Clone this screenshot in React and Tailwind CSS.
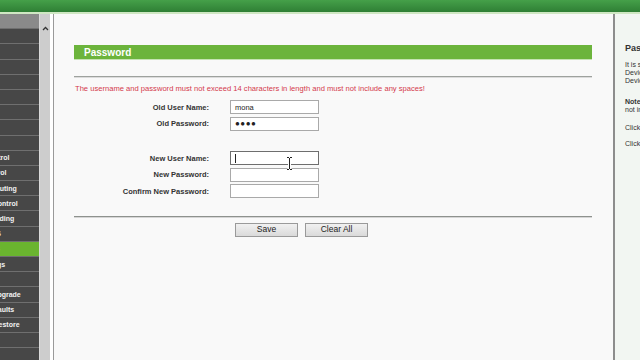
import React from "react";

const menu = [
  { label: "Status", tone: "head" },
  { label: "Quick Setup" },
  { label: "WPS" },
  { label: "Network" },
  { label: "Wireless" },
  { label: "DHCP" },
  { label: "NAT" },
  { label: "Forwarding" },
  { label: "Security" },
  { label: "Parental Control" },
  { label: "Access Control" },
  { label: "Advanced Routing" },
  { label: "Bandwidth Control" },
  { label: "IP & MAC Binding" },
  { label: "Dynamic DNS" },
  { label: "System Tools", tone: "active" },
  { label: "- Time Settings" },
  { label: "- Diagnostic" },
  { label: "- Firmware Upgrade" },
  { label: "- Factory Defaults" },
  { label: "- Backup & Restore" },
  { label: "- Reboot" },
  { label: "- Password" },
  { label: "- System Log" },
];

function Sidebar() {
  return (
    <div className="w-[39px] flex flex-col overflow-hidden bg-[#474747]">
      {menu.map((item) => (
        <div
          key={item.label}
          className={
            "h-[15.2px] shrink-0 border-b border-[#6f6f6f] flex items-center overflow-hidden whitespace-nowrap " +
            (item.tone === "head"
              ? "bg-[#8a8a8a]"
              : item.tone === "active"
              ? "bg-[#6ab42f]"
              : "bg-[#474747]")
          }
        >
          <span className="ml-[-45px] text-[7px] leading-none font-bold text-[#f2f2f2]">
            {item.label}
          </span>
        </div>
      ))}
    </div>
  );
}

function Field({ label, value, focused }) {
  return (
    <div className="flex items-center h-[16.5px]">
      <div className="w-[135px] text-right text-[7.5px] font-bold text-[#333]">{label}</div>
      <div
        className={
          "ml-[21px] w-[89px] h-[14px] bg-white flex items-center px-[4px] text-[7.5px] text-[#222] " +
          (focused ? "border border-[#6e6e6e]" : "border border-[#a9a9a9]")
        }
      >
        {focused ? <span className="w-px h-[9px] bg-[#222]" /> : value}
      </div>
    </div>
  );
}

export default function App() {
  return (
    <div
      className="w-[640px] h-[360px] flex flex-col overflow-hidden bg-white relative"
      style={{ fontFamily: '"Liberation Sans", Arial, sans-serif' }}
    >
      {/* top bar */}
      <div className="h-[12px] bg-gradient-to-b from-[#45a049] to-[#2f7f35]" />
      <div className="h-[2px] bg-[#cfe7c3]" />

      <div className="flex-1 flex min-h-0">
        <Sidebar />

        {/* scrollbar */}
        <div className="w-[11px] bg-[#cdcdcd] border-l border-[#dadada] flex justify-center pt-[12px]">
          <svg width="7" height="5" viewBox="0 0 7 5">
            <path d="M1 4 L3.5 1.5 L6 4" stroke="#333" strokeWidth="1.3" fill="none" />
          </svg>
        </div>
        <div className="w-[3px] bg-white" />

        {/* main */}
        <div className="flex-1 border-l border-[#9a9a9a] bg-[#f9f9f9] pt-[31px] pl-[20px] pr-[21px]">
          <div className="h-[15px] bg-[#6cb43c] flex items-center pl-[10px] border-b border-[#c6e3b3]">
            <span className="text-[10px] font-bold text-white">Password</span>
          </div>
          <div className="mt-[16px] h-[2px] border-t border-[#9ea29e] bg-[#dcdcdc]" />
          <div className="mt-[6px] text-[7.6px] leading-[10px] text-[#d43a4c] pl-px whitespace-nowrap">
            The username and password must not exceed 14 characters in length and must not include any spaces!
          </div>

          <div className="mt-[5px] flex flex-col">
            <Field label="Old User Name:" value="mona" />
            <Field label="Old Password:" value={<span className="tracking-[0.5px] text-[8px]">●●●●</span>} />
          </div>
          <div className="mt-[18px] flex flex-col">
            <Field label="New User Name:" focused />
            <Field label="New Password:" value="" />
            <Field label="Confirm New Password:" value="" />
          </div>

          <div className="mt-[16px] h-[2px] border-t border-[#8e928e] bg-[#d6d6d6]" />

          <div className="mt-[5px] flex gap-[7px] pl-[161px]">
            <button className="w-[63px] h-[14px] border border-[#9a9a9a] bg-gradient-to-b from-[#f1f1f1] to-[#dadada] text-[8.5px] text-[#222] leading-none">
              Save
            </button>
            <button className="w-[63px] h-[14px] border border-[#9a9a9a] bg-gradient-to-b from-[#f1f1f1] to-[#dadada] text-[8.5px] text-[#222] leading-none">
              Clear All
            </button>
          </div>
        </div>

        {/* help panel */}
        <div className="w-[27px] border-l-2 border-[#8d8d8d] bg-[#f2f6f2] overflow-hidden whitespace-nowrap pl-[10px] pt-[28px] text-[#333]">
          <div className="text-[9px] font-bold leading-[12px]">Password Help</div>
          <div className="mt-[7px] text-[7px] leading-[8px]">
            <div>It is strongly recommended that you change the factory default</div>
            <div>Device user name and password, because all users who try to</div>
            <div>Device's Web-based utility will be prompted for them.</div>
          </div>
          <div className="mt-[13px] text-[7px] leading-[8px]">
            <div><span className="font-bold">Note:</span> The new user name and password must</div>
            <div>not include any spaces.</div>
          </div>
          <div className="mt-[10px] text-[7px] leading-[8px]">Click the Save button to save your settings.</div>
          <div className="mt-[8px] text-[7px] leading-[8px]">Click the Clear All button to clear all fields.</div>
        </div>
      </div>

      {/* mouse I-beam cursor */}
      <svg className="absolute left-[286px] top-[157px]" width="7" height="13" viewBox="0 0 7 13">
        <path d="M1 0.5 H3 V12.5 H1 M6 0.5 H4 V12.5 H6 M2 6.5 H5" stroke="#fff" strokeWidth="2" fill="none" />
        <path d="M1 0.5 H3 M4 0.5 H6 M3.5 1 V12 M1 12.5 H3 M4 12.5 H6" stroke="#222" strokeWidth="1" fill="none" />
      </svg>
    </div>
  );
}
